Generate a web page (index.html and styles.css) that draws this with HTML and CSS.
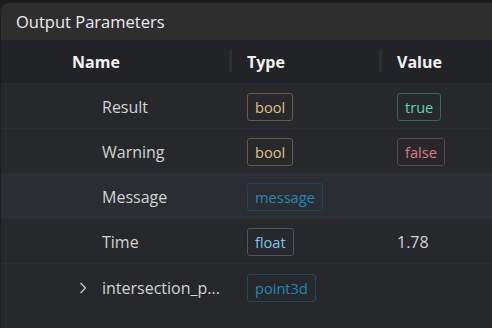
FILE: index.html
```html
<!DOCTYPE html>
<html lang="en">
<head>
  <meta charset="UTF-8" />
  <title>Output Parameters</title>
  <link rel="stylesheet" href="styles.css">
</head>
<body>
  <div class="panel">
    <div class="panel-title">Output Parameters</div>
    <div class="table">
      <div class="row head">
        <div class="cell"></div>
        <div class="cell col-name">Name</div>
        <div class="cell col-type">Type</div>
        <div class="cell col-value">Value</div>
      </div>
      <div class="row">
        <div class="cell"></div>
        <div class="cell name">Result</div>
        <div class="cell"><span class="tag bool">bool</span></div>
        <div class="cell"><span class="tag yes">true</span></div>
      </div>
      <div class="row">
        <div class="cell"></div>
        <div class="cell name">Warning</div>
        <div class="cell"><span class="tag bool">bool</span></div>
        <div class="cell"><span class="tag no">false</span></div>
      </div>
      <div class="row hover">
        <div class="cell"></div>
        <div class="cell name">Message</div>
        <div class="cell"><span class="tag msg">message</span></div>
        <div class="cell"></div>
      </div>
      <div class="row">
        <div class="cell"></div>
        <div class="cell name">Time</div>
        <div class="cell"><span class="tag float">float</span></div>
        <div class="cell value">1.78</div>
      </div>
      <div class="row last">
        <div class="cell"></div>
        <div class="cell name tree">
          <svg class="chevron" width="8" height="12" viewBox="0 0 8 12"><path d="M1.5 1 L6.5 6 L1.5 11" fill="none" stroke="#c8c8c8" stroke-width="1.3"/></svg>
          <span>intersection_p...</span>
        </div>
        <div class="cell"><span class="tag msg">point3d</span></div>
        <div class="cell"></div>
      </div>
    </div>
  </div>
</body>
</html>
```

FILE: styles.css
```css
* { box-sizing: border-box; margin: 0; padding: 0; }
body {
  background: #1b1c1f;
  font-family: "Open Sans", "Noto Sans", sans-serif;
  color: #d6d6d6;
  width: 492px;
  height: 328px;
  overflow: hidden;
}
.panel {
  margin-top: 3px;
  margin-left: 1px;
  background: #26282c;
  border-radius: 7px 0 0 0;
  height: 325px;
  overflow: hidden;
}
.panel-title {
  height: 37px;
  background: #2e2e2f;
  padding-left: 15px;
  font-size: 16.5px;
  line-height: 38px;
  color: #ececec;
}
.row {
  display: grid;
  grid-template-columns: 56px 175px 150px 1fr;
  height: 45px;
  border-bottom: 1px solid #2c2e33;
  align-items: center;
  padding-top: 2px;
}
.row.last { border-bottom: none; }
.row.head {
  background: #222327;
  height: 44px;
  padding-top: 1px;
  border-bottom: 1px solid #2b2c30;
  font-weight: bold;
  color: #f2f2f2;
}
.row.hover { background: #2a2d31; }
.cell {
  padding-left: 15px;
  font-size: 16px;
  display: flex;
  align-items: center;
}
.head .cell {
  position: relative;
  height: 100%;
}
.head .col-type::before,
.head .col-value::before {
  content: "";
  position: absolute;
  left: -3px;
  top: 9px;
  width: 3px;
  height: 22px;
  background: #2c2e33;
}
.cell.name {
  padding-left: 45px;
  color: #d4d4d4;
}
.cell.name.tree { padding-left: 22px; }
.chevron { margin-right: 15px; }
.cell.value { color: #d4d4d4; }
.tag {
  display: inline-block;
  height: 28px;
  line-height: 26px;
  padding: 0 7px;
  border: 1px solid;
  border-radius: 3px;
  font-size: 14.6px;
}
.tag.bool { color: #e2c07c; border-color: #6b5c40; }
.tag.yes { color: #5fd3a6; border-color: #2e6a5b; }
.tag.no { color: #e27a80; border-color: #6a3e43; }
.tag.msg { color: #2288b8; border-color: #1f4a5e; }
.tag.float { color: #7cc3ea; border-color: #4a5562; }
```
